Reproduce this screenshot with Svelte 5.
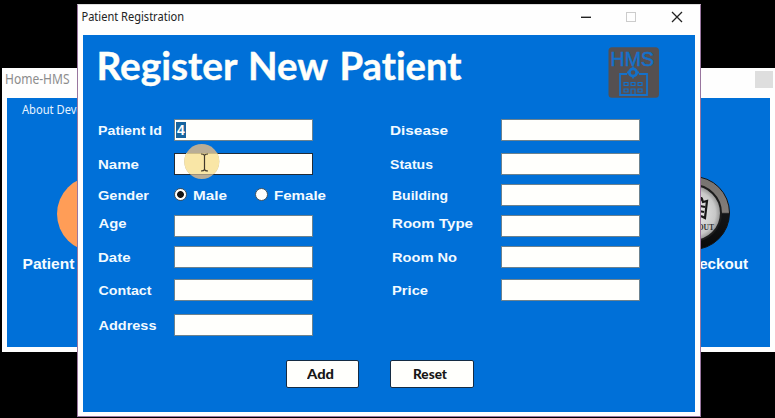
<script>
  const left = [
    { text: 'Patient Id', width: 64, value: '4' },
    { text: 'Name', width: 41, focus: true },
    { text: 'Gender', width: 51, radio: true },
    { text: 'Age', width: 28, dy: -3, dx: 0.5 },
    { text: 'Date', width: 32.5 },
    { text: 'Contact', width: 53, dx: 0.5 },
    { text: 'Address', width: 58, dx: 0.5 }
  ];
  const right = [
    { text: 'Disease', width: 58 },
    { text: 'Status', width: 43 },
    { text: 'Building', width: 56, dx: 2 },
    { text: 'Room Type', width: 81, dx: 2, dy: -3 },
    { text: 'Room No', width: 65, dx: 2 },
    { text: 'Price', width: 36, dx: 2 }
  ];
</script>

{#snippet label(text, width, dx = 0, dy = 0)}
  <svg class="label" width="100" height="22">
    <text x={dx} y={15.5 + dy} textLength={width} lengthAdjust="spacingAndGlyphs">{text}</text>
  </svg>
{/snippet}

{#snippet column(fields)}
  <div class="column">
    {#each fields as f}
      <div class="row">
        {@render label(f.text, f.width, f.dx, f.dy)}
        {#if f.radio}
          <div class="radios">
            <span class="radio on"></span>
            <svg class="label" width="56" height="22"><text x="0" y="15.500" textLength="34" lengthAdjust="spacingAndGlyphs">Male</text></svg>
            <span class="radio"></span>
            <svg class="label" width="60" height="22"><text x="0" y="15.500" textLength="52" lengthAdjust="spacingAndGlyphs">Female</text></svg>
          </div>
        {:else}
          <div class="input" class:focus={f.focus}>
            {#if f.value}<span class="selected">{f.value}</span>{/if}
          </div>
        {/if}
      </div>
    {/each}
  </div>
{/snippet}

<div class="desktop">
  <div class="window home">
    <div class="hometitle">
      <svg width="90" height="30"><text x="3" y="16" textLength="64.500" lengthAdjust="spacingAndGlyphs">Home-HMS</text></svg>
      <span class="homeclose"></span>
    </div>
    <div class="homebody">
      <svg width="763" height="249" viewBox="7 98 763 249">
        <defs>
          <linearGradient id="ring" x1="0" y1="0" x2="0" y2="1">
            <stop offset="0" stop-color="#777370" /><stop offset=".49" stop-color="#827d79" />
            <stop offset=".51" stop-color="#141618" /><stop offset="1" stop-color="#08090a" />
          </linearGradient>
          <radialGradient id="face">
            <stop offset="0" stop-color="#f2f2f2" /><stop offset=".8" stop-color="#c8c8c8" /><stop offset="1" stop-color="#8d8d8d" />
          </radialGradient>
        </defs>
        <text class="menu" x="22" y="114" textLength="88" lengthAdjust="spacingAndGlyphs">About Developer</text>
        <circle cx="95" cy="214" r="38" fill="#ff9d57" />
        <text class="tile" x="22.500" y="269" textLength="52" lengthAdjust="spacingAndGlyphs">Patient</text>
        <circle cx="693" cy="213" r="36.500" fill="url(#ring)" stroke="#141414" />
        <circle cx="693" cy="213" r="28" fill="url(#face)" stroke="#1d1d1d" stroke-width="2" />
        <path d="M698 201l4-2 1 3 4-1-2 17-4-2M700 206l5 1M699 211l5 1M701 199v-2" fill="none" stroke="#171717" stroke-width="2.200" />
        <text class="out" x="670" y="230" textLength="44" lengthAdjust="spacingAndGlyphs">CHECKOUT</text>
        <text class="tile" x="679" y="269" textLength="69" lengthAdjust="spacingAndGlyphs">Checkout</text>
      </svg>
    </div>
  </div>

  <div class="window dialog">
    <div class="titlebar">
      <svg width="622" height="31" viewBox="78 5 622 31">
        <text x="81.500" y="21" textLength="102.500" lengthAdjust="spacingAndGlyphs">Patient Registration</text>
        <path d="M581 17.300h10" stroke="#222" stroke-width="1.400" />
        <rect x="626.500" y="12.500" width="9" height="9" fill="none" stroke="#ccc" />
        <path d="M672 12l10 10M682 12l-10 10" stroke="#222" stroke-width="1.300" />
      </svg>
    </div>
    <div class="content">
      <div class="header">
        <svg class="heading" width="390" height="60">
          <text x="13.500" y="45" textLength="141" lengthAdjust="spacingAndGlyphs">Register</text>
          <text x="165" y="45" textLength="80" lengthAdjust="spacingAndGlyphs">New</text>
          <text x="256.500" y="45" textLength="122" lengthAdjust="spacingAndGlyphs">Patient</text>
        </svg>
        <svg class="logo" width="52" height="52" viewBox="608 47 52 52">
          <rect x="608.500" y="47.300" width="50.500" height="50.500" rx="3.500" fill="#555051" />
          <text x="610.500" y="66" textLength="43.500" lengthAdjust="spacingAndGlyphs">HMS</text>
          <g fill="none" stroke="#1471cb" stroke-width="1.800">
            <path d="M627 74h-7v21h27V74h-8" />
            <circle cx="633" cy="72.500" r="3.700" stroke-width="2.800" />
            <path d="M633 66.500v3M633 75.500v3M627 72.500h2M637 72.500h2" />
            <path d="M624 82.500h4v3h-4zM631 82.500h4v3h-4zM638 82.500h4v3h-4zM624 89h4v3h-4zM638 89h4v3h-4zM631 95v-6h4v6" stroke-width="1.200" />
          </g>
        </svg>
      </div>
      <div class="fields">
        {@render column(left)}
        {@render column(right)}
      </div>
      <div class="actions">
        <div class="button add"><svg width="28" height="20"><text x="0" y="14.500" textLength="27" lengthAdjust="spacingAndGlyphs">Add</text></svg></div>
        <div class="button reset"><svg width="35" height="20"><text x="0" y="14.500" textLength="34" lengthAdjust="spacingAndGlyphs">Reset</text></svg></div>
      </div>
    </div>
  </div>

  <svg class="pointer" width="36" height="38" viewBox="0 0 36 38">
    <defs><clipPath id="field"><rect x="0" y="10" width="36" height="21" /></clipPath></defs>
    <circle cx="17.800" cy="18.500" r="17.500" fill="#b9ad96" />
    <circle cx="17.800" cy="18.500" r="17.500" fill="#f9e6a6" clip-path="url(#field)" />
    <path d="M3 10.500h30M6 31.500h24" stroke="#51452f" stroke-opacity=".25" />
    <path d="M17 11q3 0 3.500 1.500Q21 11 24 11M20.500 12.500v15M17 28q3 0 3.500-1.500Q21 28 24 28" fill="none" stroke="#40382a" stroke-width="1.200" />
  </svg>
</div>

<style>
  :global(body) { margin: 0; background: #000; overflow: hidden; }
  svg { display: block; flex: none; }
  .desktop { position: relative; width: 775px; height: 418px; background: #000; overflow: hidden; }
  .window { position: absolute; box-sizing: border-box; background: #fefefe; }
  .home { left: 2px; top: 68px; width: 773px; height: 284px; padding: 0 5px 5px 5px; }
  .hometitle { display: flex; justify-content: space-between; height: 30px; margin-left: -5px; }
  .hometitle text { font: 13.5px "Noto Sans", sans-serif; fill: #8c8c8c; }
  .homeclose { width: 18px; height: 17px; margin-top: 3px; margin-right: -3px; background: #dedede; }
  .homebody { height: 249px; background: #0070d8; overflow: hidden; }
  .menu { font: 12px "Noto Sans", sans-serif; fill: #e6f3ff; }
  .tile { font: bold 14.5px "Liberation Sans", sans-serif; fill: #f5fcff; }
  .out { font: bold 8px "Liberation Serif", serif; fill: #333; }
  .dialog { left: 77px; top: 4px; width: 624px; height: 413px; border: 1px solid #99769f; border-top-color: #ddd; padding: 0 5px 4px; }
  .titlebar { height: 30px; margin: 0 -5px; }
  .titlebar text { font: 12.3px "Noto Sans", sans-serif; fill: #222; }
  .content { height: 377px; background: #0070d8; }
  .header { display: flex; height: 84px; justify-content: space-between; }
  .heading text { font: bold 37.5px Lato, sans-serif; fill: #fffffa; stroke: #fffffa; stroke-width: .4; font-variant-ligatures: none; }
  .logo { margin: 12px 35px 0 0; }
  .logo text { font: 19.5px "Liberation Sans", sans-serif; fill: #1471cb; stroke: #1471cb; stroke-width: .5; }
  .fields { display: flex; gap: 78px; padding-left: 15px; height: 241px; }
  .column { display: grid; width: 214px; grid-template-rows: 34px 31px 31px 31px 33px 35px 21px; align-items: start; align-content: start; }
  .column:last-child { width: 250px; }
  .row { display: flex; height: 22px; }
  .row > .label { width: 76px; overflow: visible; }
  .column:last-child .row > .label { width: 111px; }
  .label text { font: bold 13.5px "Liberation Sans", sans-serif; fill: #f2faff; }
  .input { box-sizing: border-box; width: 139px; height: 22px; border: 1px solid #6b828f; background: #fffffc; padding: 1px; }
  .input.focus { border-color: #222b35; }
  .selected { display: block; width: 10px; height: 16px; margin-top: 1px; background: #17649f; color: #fff; font: bold 14px/16px "Liberation Sans", sans-serif; text-align: center; }
  .radios { display: flex; align-items: center; gap: 6px; height: 22px; }
  .radio { box-sizing: border-box; width: 13px; height: 13px; border: 1px solid #41525c; border-radius: 50%; background: #fffffc; }
  .radios .radio { margin-top: -1px; }
  .on { background: radial-gradient(circle, #151515 0 3px, #fffffc 3.8px); }
  .actions { display: flex; gap: 31px; padding-left: 203px; }
  .button { box-sizing: border-box; display: flex; align-items: center; justify-content: center; height: 28px; border: 1.5px solid #142b43; border-radius: 2px; background: #fffffc; }
  .button text { font: 900 13.5px Lato, sans-serif; fill: #171717; }
  .add { width: 73px; padding-right: 3px; }
  .reset { width: 84px; padding-right: 3px; }
  .pointer { position: absolute; left: 184px; top: 143px; }
</style>
